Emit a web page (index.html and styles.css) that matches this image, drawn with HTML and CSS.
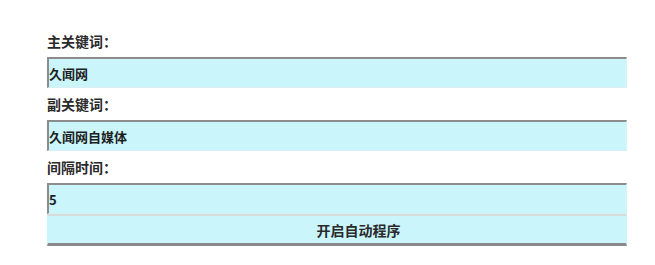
FILE: index.html
```html
<!DOCTYPE html>
<html lang="zh">
<head>
<meta charset="utf-8">
<link rel="stylesheet" href="styles.css">
</head>
<body>
<form class="panel">
  <label class="label">主关键词：</label>
  <input class="field" type="text" value="久闻网">
  <label class="label">副关键词：</label>
  <input class="field" type="text" value="久闻网自媒体">
  <label class="label">间隔时间：</label>
  <input class="field" type="text" value="5">
  <button class="btn" type="button">开启自动程序</button>
</form>
</body>
</html>
```
FILE: styles.css
```css
html, body {
  margin: 0;
  padding: 0;
  background: #ffffff;
}
.panel {
  display: flex;
  flex-direction: column;
  width: 580px;
  padding: 25px 0 0 47px;
  font-family: "Noto Sans CJK SC", "Noto Sans", sans-serif;
}
.label {
  display: block;
  height: 32px;
  line-height: 33px;
  font-size: 14px;
  font-weight: bold;
  color: #2a2a2a;
}
.field {
  box-sizing: border-box;
  width: 580px;
  height: 31px;
  margin: 0;
  padding: 0;
  background: #c9f5fb;
  border-style: solid;
  border-width: 2px 1px 1px 2px;
  border-color: #8c8c8c #d8f3f6 #d8eef0 #8c8c8c;
  font-family: "Noto Sans CJK SC", "Noto Sans", sans-serif;
  font-size: 13px;
  font-weight: bold;
  color: #1e1e1e;
  outline: none;
}
.btn {
  box-sizing: border-box;
  width: 580px;
  height: 32px;
  margin: 0;
  padding: 0 0 0 43px;
  background: #c9f5fb;
  border-style: solid;
  border-width: 2px 1px 3px 1px;
  border-color: #d4dcdc #c9f5fb #8a8a8a #c9f5fb;
  font-family: "Noto Sans CJK SC", "Noto Sans", sans-serif;
  font-size: 14px;
  font-weight: bold;
  color: #2a2a2a;
  text-align: center;
}
```
